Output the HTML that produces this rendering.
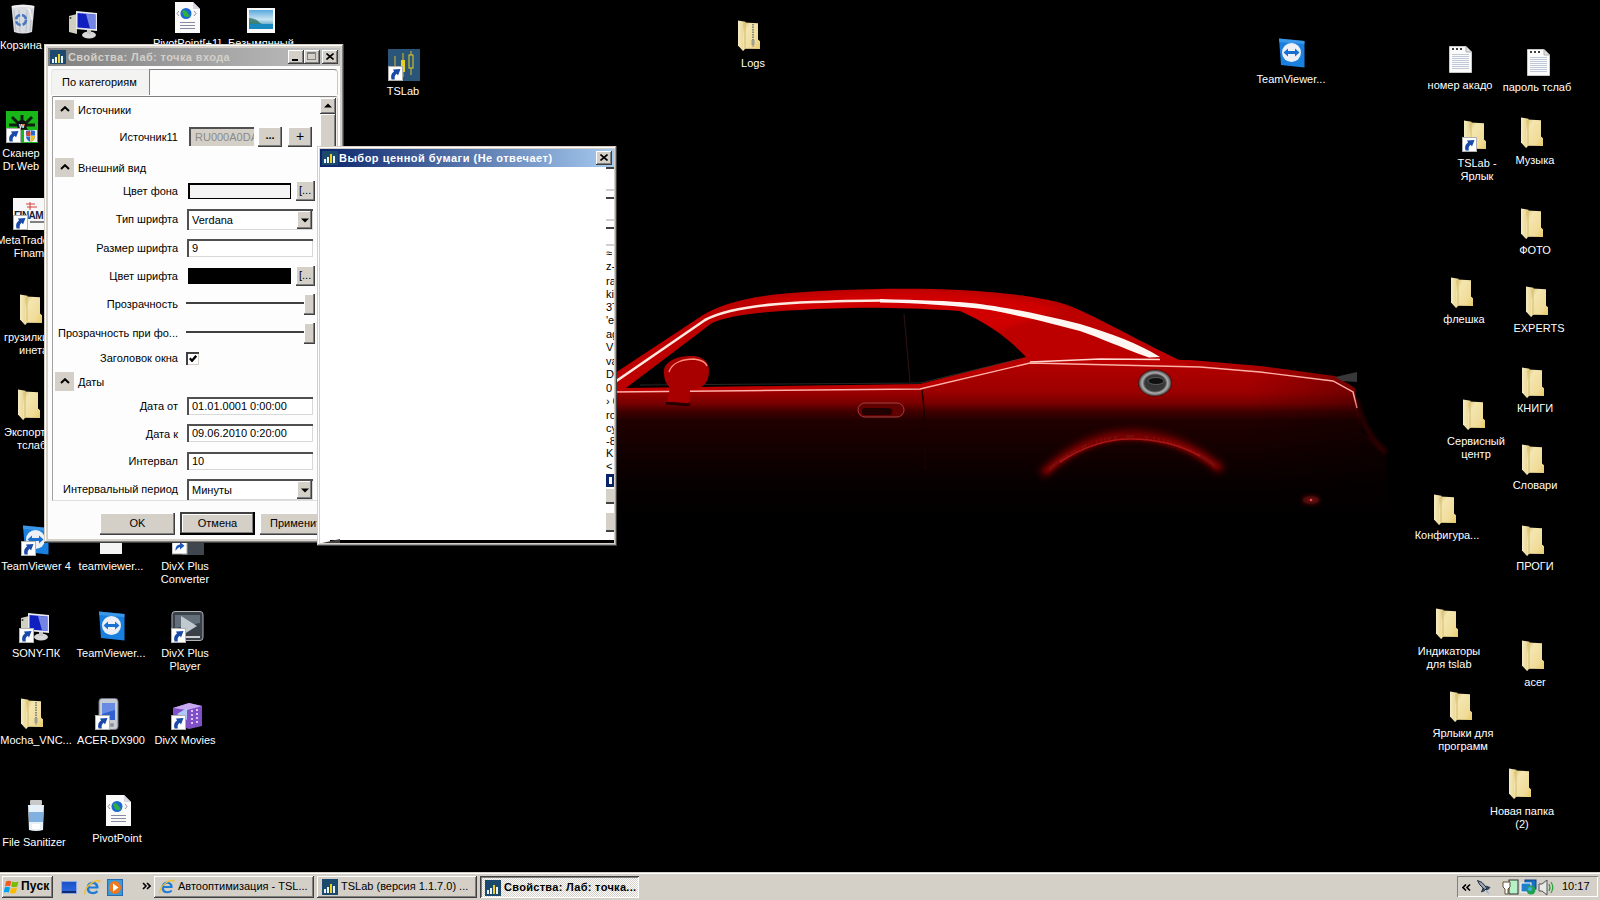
<!DOCTYPE html>
<html><head><meta charset="utf-8">
<style>
*{box-sizing:border-box;margin:0;padding:0}
html,body{width:1600px;height:900px;overflow:hidden;background:#000}
body{position:relative;font-family:"Liberation Sans",sans-serif;font-size:11px;color:#000}
.a{position:absolute}
.lbl{position:absolute;color:#fff;font-size:11px;line-height:13px;text-align:center;white-space:nowrap}
.raised{background:#d4d0c8;box-shadow:inset -1px -1px #404040,inset 1px 1px #fff,inset -2px -2px #808080,inset 2px 2px #d4d0c8}
.sunken{box-shadow:inset 1px 1px #808080,inset -1px -1px #fff,inset 2px 2px #404040,inset -2px -2px #d4d0c8}
.pl{position:absolute;right:0;text-align:right;white-space:nowrap;line-height:13px}
</style></head>
<body>
<!-- CAR -->
<svg class="a" style="left:0;top:0" width="1600" height="900" viewBox="0 0 1600 900">
<defs>
<filter id="b1" x="-10%" y="-10%" width="120%" height="120%"><feGaussianBlur stdDeviation="0.7"/></filter>
<filter id="b2" x="-10%" y="-30%" width="120%" height="160%"><feGaussianBlur stdDeviation="2"/></filter>
<filter id="b3" x="-10%" y="-30%" width="120%" height="160%"><feGaussianBlur stdDeviation="3.5"/></filter>
<linearGradient id="cbody" x1="0" y1="360" x2="0" y2="520" gradientUnits="userSpaceOnUse">
<stop offset="0" stop-color="#b40000"/>
<stop offset="0.2" stop-color="#9c0000"/>
<stop offset="0.27" stop-color="#780000"/>
<stop offset="0.32" stop-color="#420000"/>
<stop offset="0.38" stop-color="#200000"/>
<stop offset="0.55" stop-color="#140000"/>
<stop offset="0.75" stop-color="#080000"/>
<stop offset="1" stop-color="#000"/>
</linearGradient>
<linearGradient id="crear" x1="1250" y1="0" x2="1390" y2="0" gradientUnits="userSpaceOnUse">
<stop offset="0" stop-color="#000" stop-opacity="0"/>
<stop offset="1" stop-color="#000" stop-opacity="0.35"/>
</linearGradient>
<radialGradient id="cap" cx="0.5" cy="0.5" r="0.5"><stop offset="0" stop-color="#303030"/><stop offset="0.6" stop-color="#383838"/><stop offset="0.75" stop-color="#b0b0b0"/><stop offset="0.88" stop-color="#707070"/><stop offset="1" stop-color="#400000"/></radialGradient>
</defs>
<!-- body side -->
<path d="M612 380 L920 380 L1030 358 L1190 360 L1260 366 L1335 376 L1355 388 L1358 410 L1362 432 L1386 452 L1390 520 L612 520 Z" fill="url(#cbody)"/>
<path d="M1250 360 L1360 380 L1390 455 L1390 520 L1250 520 Z" fill="url(#crear)"/>
<!-- greenhouse / roof -->
<path d="M612 375 L700 317 C715 307 740 298 780 294 C820 290 900 287 960 290 C1010 293 1050 298 1070 306 C1100 318 1140 342 1192 366 L1030 362 L920 388 L612 392 Z" fill="#bc0000" filter="url(#b1)"/>
<path d="M750 302 C800 294 900 291 960 294 C1010 297 1040 302 1060 310 L1000 330 L850 320Z" fill="#d00404" filter="url(#b2)"/>
<!-- window -->
<path d="M626 388 L712 323 C730 315 760 312 800 310 C840 308 880 306 960 311 C985 322 1005 335 1026 357 L920 384 Z" fill="#020000" filter="url(#b1)"/>
<path d="M904 314 L910 382" stroke="#2a1010" stroke-width="1.2"/>
<path d="M640 385 L920 383 L1020 359" stroke="#404040" stroke-width="1" fill="none" opacity="0.6"/>
<!-- A pillar / roof highlight -->
<path d="M612 384 L705 320 C720 312 750 305 800 302.5 C840 301 860 300.5 882 300.5" stroke="#ffe8e0" stroke-width="2.6" fill="none" filter="url(#b1)"/>
<path d="M880 299 C920 300 950 301 970 303 C1000 306 1040 314 1080 324 C1110 333 1140 344 1160 357 L1149 357.5 C1120 347 1100 338 1080 331 C1040 320 1010 314 990 310 C960 306 920 303 880 302.5Z" fill="#fff6f2" filter="url(#b1)"/>
<path d="M1160 359.5 L1100 359 L1030 362" stroke="#ffd8d0" stroke-width="1.3" fill="none" filter="url(#b1)"/>
<!-- beltline highlight -->
<path d="M612 392 L920 389 L1030 363 L1200 367 L1260 372 L1333 381 L1353 392 L1357 408" stroke="#ffb0a8" stroke-width="1.4" fill="none" filter="url(#b1)"/>
<!-- door seam -->
<path d="M922 390 Q926 420 925 470" stroke="#1a0000" stroke-width="1.5" fill="none"/>
<!-- mirror -->
<path d="M664 374 C662 360 680 355 695 356 C708 358 711 368 708 378 C706 386 698 390 690 390 L689 402 C684 406 672 405 667 401 L670 388 C666 384 664 379 664 374Z" fill="#a80000" filter="url(#b1)"/>
<path d="M669 372 C672 362 684 359 694 359 C702 360 706 363 707 366" stroke="#ff9080" stroke-width="1.3" fill="none" filter="url(#b1)"/>
<path d="M666 403 L690 405" stroke="#200000" stroke-width="3" filter="url(#b1)"/>
<!-- door handle -->
<rect x="858" y="403" width="46" height="14" rx="7" fill="#600000" stroke="#a04040" stroke-width="1" filter="url(#b1)"/>
<rect x="862" y="408" width="30" height="7" rx="3" fill="#200000"/>
<!-- gas cap -->
<ellipse cx="1155" cy="383" rx="17" ry="13.5" fill="url(#cap)"/>
<ellipse cx="1156" cy="381" rx="8" ry="3.5" fill="#101010" stroke="#808080" stroke-width="0.6"/>
<!-- spoiler -->
<path d="M1335 377 L1357 372 L1357 382 L1342 381Z" fill="#383838"/>
<!-- rear bumper edge glow -->
<path d="M1357 400 Q1362 432 1386 452" stroke="#700808" stroke-width="2" fill="none" filter="url(#b2)"/>
<!-- wheel arch -->
<path d="M1042 474 Q1085 434 1130 434 Q1180 434 1222 470" stroke="#6a0606" stroke-width="9" fill="none" filter="url(#b3)"/>
<path d="M1046 472 Q1085 437 1130 437 Q1180 437 1218 468" stroke="#9a0c0c" stroke-width="3.5" fill="none" filter="url(#b2)"/>
<path d="M1060 462 Q1095 439 1130 439 Q1170 439 1200 456" stroke="#a81414" stroke-width="1.5" fill="none" filter="url(#b1)"/>
<!-- red light -->
<ellipse cx="1311" cy="500" rx="9" ry="4" fill="#701010" filter="url(#b2)"/>
<circle cx="1311" cy="500" r="1.3" fill="#e05050"/>
</svg>


<!-- ICONS -->
<svg width="0" height="0" style="position:absolute">
<defs>
<linearGradient id="gfb" x1="0" y1="0" x2="1" y2="0"><stop offset="0" stop-color="#f6ecc0"/><stop offset="1" stop-color="#e6d08a"/></linearGradient>
<linearGradient id="gff" x1="0" y1="0" x2="1" y2="1"><stop offset="0" stop-color="#d8c070"/><stop offset="0.25" stop-color="#f4e6b0"/><stop offset="0.7" stop-color="#f0dc98"/><stop offset="1" stop-color="#e8c860"/></linearGradient>
<symbol id="fold" viewBox="0 0 22 31">
<path d="M0 0.5L7.5 1.8V28.5L5 31L0 25.5Z" fill="url(#gfb)"/>
<path d="M6.5 2.5L20 3.2V19.5L22 21.2V29L6.5 28.8L5 31V4Z" fill="url(#gff)"/>
<path d="M7 3V29" stroke="#d9c27a" stroke-width="1.2"/>
</symbol>
<symbol id="zfold" viewBox="0 0 22 31">
<use href="#fold"/>
<path d="M15 4V27" stroke="#8a8a80" stroke-width="2" stroke-dasharray="1.5 1"/>
<rect x="13.5" y="20" width="3" height="5" fill="#a0a090"/>
</symbol>
<symbol id="txt" viewBox="0 0 23 27">
<path d="M0.5 0.5H17L22.5 6V26.5H0.5Z" fill="#fbfbfb" stroke="#c8c8c8"/>
<path d="M17 0.5V6H22.5" fill="#e0e0e0" stroke="#b0b0b0"/>
<g fill="#404040"><rect x="3" y="2" width="2" height="2"/><rect x="7" y="2" width="2" height="2"/><rect x="11" y="2" width="2" height="2"/></g>
<g stroke="#c0c8d8" stroke-width="1"><path d="M3 8.5H20M3 10.5H20M3 12.5H20M3 14.5H20M3 16.5H20M3 18.5H20M3 20.5H20M3 22.5H20"/></g>
</symbol>
<symbol id="html" viewBox="0 0 25 31">
<path d="M0 0H18L25 7V31H0Z" fill="#fafafa"/>
<path d="M18 0V7H25Z" fill="#d8d8e0"/>
<circle cx="11" cy="11.5" r="5.5" fill="#1a6ad0"/><path d="M7 9Q10 7 12 10T15 14Q12 16 9 14Z" fill="#30b040"/>
<path d="M4 9L2 11.5L4 14M19 9L21 11.5L19 14" stroke="#9090a0" stroke-width="1" fill="none"/>
<path d="M5 20.5H20M5 23.5H20M5 26.5H20" stroke="#8a8aa0" stroke-width="1"/>
</symbol>
<symbol id="img" viewBox="0 0 28 25">
<rect width="28" height="25" fill="#fafafa"/>
<linearGradient id="gsky" x1="0" y1="0" x2="0" y2="1"><stop offset="0" stop-color="#5aa8e0"/><stop offset="0.5" stop-color="#c8e4f0"/><stop offset="1" stop-color="#1a80b0"/></linearGradient>
<rect x="2" y="2" width="24" height="19" fill="url(#gsky)"/>
<path d="M2 10Q8 10 12 14T26 16V21H2Z" fill="#2a7060" opacity="0.8"/>
<rect x="2" y="16" width="24" height="5" fill="#1a88c0"/>
</symbol>
<symbol id="bin" viewBox="0 0 24 31">
<path d="M0.5 2Q12 -1 23.5 2L21 28Q12 31 3 28Z" fill="#d8dce0"/>
<path d="M1 3Q12 1 23 3" stroke="#f0f0f0" stroke-width="2" fill="none"/>
<path d="M3 6L5 27M8 6L9 28M16 6L15 28M21 6L19 27" stroke="#b8bcc4" stroke-width="1"/>
<circle cx="10" cy="16" r="5" fill="none" stroke="#4a78c0" stroke-width="2.5" stroke-dasharray="6 2"/>
<path d="M17 4Q20 7 21 16" stroke="#fff" stroke-width="1.5" fill="none" opacity="0.7"/>
</symbol>
<symbol id="comp" viewBox="0 0 32 30">
<path d="M1 6L9 4V24L1 22Z" fill="#d0d0c0"/><circle cx="2.5" cy="8" r="1" fill="#404040"/>
<path d="M8 1L29 3V21L8 19Z" fill="#e8eaf0"/>
<path d="M9.5 3L27.5 4.5V19L9.5 17.5Z" fill="#1020c0"/>
<path d="M18 4L27.5 4.5V19L22 18.5Z" fill="#a0b0f0" opacity="0.7"/>
<ellipse cx="21" cy="25" rx="7" ry="3.5" fill="#d8d8d8"/><rect x="19" y="20" width="4" height="4" fill="#c8c8c8"/>
</symbol>
<symbol id="tv" viewBox="0 0 26 30">
<path d="M0 0.5L25.5 3V29.5L2 27Z" fill="#1a80e0"/>
<path d="M0 0.5L25.5 3V6L0 4Z" fill="#50a8f0" opacity="0.6"/>
<ellipse cx="12.5" cy="14.5" rx="9.5" ry="9.5" fill="#eef0f8"/>
<path d="M4.5 14.5L9 10.5V13H16V10.5L20.5 14.5L16 18.5V16H9V18.5Z" fill="#1a70d0"/>
</symbol>
<symbol id="sc" viewBox="0 0 15 15">
<rect x="0.5" y="0.5" width="14" height="14" fill="#fff" stroke="#b0b0b0"/>
<path d="M3.5 13.5Q2 8 6 5.5L5 3.5L12.5 3L10 9.5L8.8 7.8Q6 9.5 6.8 13.5Z" fill="#1a4aa8"/>
</symbol>
<symbol id="drweb" viewBox="0 0 32 32">
<rect width="32" height="32" fill="#18b818"/>
<path d="M16 4L16 14M6 6L13 13M26 6L19 13M3 14H12M29 14H20M8 24L13 17M24 24L19 17" stroke="#102010" stroke-width="3"/>
<circle cx="16" cy="14" r="5" fill="#101010"/><text x="13" y="17" font-size="7" fill="#fff" font-family="Liberation Sans" font-weight="bold">w</text>
<path d="M18 19L31 19V31H18Z" fill="#f0f0f0"/>
<path d="M20 20Q24.5 18.5 29 20V25Q29 29 24.5 31Q20 29 20 25Z" fill="#2a6ad0"/>
<path d="M24.5 19.5V31M20 25H29" stroke="#fff" stroke-width="0.8"/>
<path d="M20.5 20.5H24.5V25H20.5Z" fill="#e04020"/><path d="M24.5 25H28.8V27Q27 30 24.5 31Z" fill="#f0c020"/>
</symbol>
<symbol id="finam" viewBox="0 0 32 32">
<rect width="32" height="32" fill="#f8f8f8"/>
<path d="M13 6H22M14 9H24M17 4V12" stroke="#d04040" stroke-width="1"/>
<text x="1" y="21" font-size="10" font-weight="bold" fill="#202040" font-family="Liberation Sans" letter-spacing="-0.5">FINAM</text>
<path d="M17 24H31" stroke="#808080" stroke-width="2"/>
</symbol>
<symbol id="divxp" viewBox="0 0 33 32">
<rect x="1" y="0.5" width="31" height="29" rx="3" fill="#3a4048" stroke="#b0b4b8"/>
<path d="M4 4H29V12L4 17Z" fill="#8090a0" opacity="0.6"/>
<path d="M10 5L26 15L10 25Z" fill="#c0c8d0"/>
<path d="M4 26H29" stroke="#d0d0d0" stroke-width="2"/>
</symbol>
<symbol id="divxm" viewBox="0 0 32 28">
<path d="M2 6L18 1L31 4V24L18 27L2 22Z" fill="#8050c8"/>
<path d="M2 6L18 1L31 4L16 8Z" fill="#c8a8f0"/>
<path d="M6 12L16 6L16 18Z" fill="#b0c8f8"/>
<path d="M21 8V24M26 7V23" stroke="#e0c0f8" stroke-width="2" stroke-dasharray="2 2"/>
</symbol>
<symbol id="pda" viewBox="0 0 23 32">
<rect x="3" y="0.5" width="19" height="31" rx="3" fill="#c8ccd4" stroke="#707480"/>
<rect x="6" y="5" width="13" height="17" fill="#3060d0"/>
<path d="M6 5H19V12L6 16Z" fill="#90a8f0" opacity="0.6"/>
<circle cx="16" cy="27" r="2" fill="#909090"/>
</symbol>
<symbol id="sanit" viewBox="0 0 18 32">
<rect x="3" y="0" width="12" height="5" rx="1" fill="#c8c8c8"/>
<path d="M1 5H17L16 30Q9 32 2 30Z" fill="#e8f0f8"/>
<rect x="2" y="12" width="14" height="10" fill="#80b0e0"/>
<rect x="5" y="24" width="8" height="5" fill="#ffffff"/>
</symbol>
<symbol id="tslab" viewBox="0 0 32 32">
<rect width="32" height="32" fill="#2a5478"/>
<path d="M7 7V28M15 4V28M23 2V26" stroke="#d8c020" stroke-width="1"/>
<rect x="13" y="11" width="4" height="12" fill="#e8d020"/>
<rect x="21" y="6" width="4" height="13" fill="#2a5478" stroke="#e8d020"/>
</symbol>
</defs>
</svg>

<svg class="a" style="left:11px;top:4px" width="24" height="31"><use href="#bin"/></svg>
<div class="lbl" style="left:-39px;width:120px;top:39px">Корзина</div>
<svg class="a" style="left:68px;top:10px" width="32" height="30"><use href="#comp"/></svg>
<svg class="a" style="left:175px;top:2px" width="25" height="31"><use href="#html"/></svg>
<div class="lbl" style="left:127px;width:120px;top:37px">PivotPoint[+1]</div>
<svg class="a" style="left:247px;top:8px" width="28" height="25"><use href="#img"/></svg>
<div class="lbl" style="left:201px;width:120px;top:37px">Безымянный</div>
<svg class="a" style="left:6px;top:111px" width="32" height="32"><use href="#drweb"/></svg>
<svg class="a" style="left:6px;top:128px" width="15" height="15"><use href="#sc"/></svg>
<div class="lbl" style="left:-39px;width:120px;top:147px">Сканер</div>
<div class="lbl" style="left:-39px;width:120px;top:160px">Dr.Web</div>
<svg class="a" style="left:13px;top:198px" width="32" height="32"><use href="#finam"/></svg>
<svg class="a" style="left:13px;top:215px" width="15" height="15"><use href="#sc"/></svg>
<div class="lbl" style="left:-31px;width:120px;top:234px">MetaTrader 4</div>
<div class="lbl" style="left:-31px;width:120px;top:247px">Finam</div>
<svg class="a" style="left:20px;top:294px" width="22" height="31"><use href="#fold"/></svg>
<svg class="a" style="left:18px;top:389px" width="22" height="31"><use href="#fold"/></svg>
<svg class="a" style="left:23px;top:525px" width="26" height="30"><use href="#tv"/></svg>
<svg class="a" style="left:21px;top:541px" width="15" height="15"><use href="#sc"/></svg>
<div class="lbl" style="left:-24px;width:120px;top:560px">TeamViewer 4</div>
<div class="lbl" style="left:51px;width:120px;top:560px">teamviewer...</div>
<div class="lbl" style="left:125px;width:120px;top:560px">DivX Plus</div>
<div class="lbl" style="left:125px;width:120px;top:573px">Converter</div>
<svg class="a" style="left:99px;top:611px" width="26" height="30"><use href="#tv"/></svg>
<div class="lbl" style="left:51px;width:120px;top:647px">TeamViewer...</div>
<svg class="a" style="left:171px;top:611px" width="33" height="32"><use href="#divxp"/></svg>
<svg class="a" style="left:171px;top:628px" width="15" height="15"><use href="#sc"/></svg>
<div class="lbl" style="left:125px;width:120px;top:647px">DivX Plus</div>
<div class="lbl" style="left:125px;width:120px;top:660px">Player</div>
<svg class="a" style="left:20px;top:612px" width="32" height="30"><use href="#comp"/></svg>
<svg class="a" style="left:19px;top:628px" width="15" height="15"><use href="#sc"/></svg>
<div class="lbl" style="left:-24px;width:120px;top:647px">SONY-ПК</div>
<svg class="a" style="left:21px;top:698px" width="22" height="31"><use href="#zfold"/></svg>
<div class="lbl" style="left:-24px;width:120px;top:734px">Mocha_VNC...</div>
<svg class="a" style="left:96px;top:698px" width="23" height="32"><use href="#pda"/></svg>
<svg class="a" style="left:95px;top:715px" width="15" height="15"><use href="#sc"/></svg>
<div class="lbl" style="left:51px;width:120px;top:734px">ACER-DX900</div>
<svg class="a" style="left:171px;top:702px" width="32" height="28"><use href="#divxm"/></svg>
<svg class="a" style="left:171px;top:715px" width="15" height="15"><use href="#sc"/></svg>
<div class="lbl" style="left:125px;width:120px;top:734px">DivX Movies</div>
<svg class="a" style="left:27px;top:800px" width="18" height="32"><use href="#sanit"/></svg>
<div class="lbl" style="left:-26px;width:120px;top:836px">File Sanitizer</div>
<svg class="a" style="left:106px;top:795px" width="25" height="31"><use href="#html"/></svg>
<div class="lbl" style="left:57px;width:120px;top:832px">PivotPoint</div>
<svg class="a" style="left:388px;top:49px" width="32" height="32"><use href="#tslab"/></svg>
<svg class="a" style="left:388px;top:66px" width="15" height="15"><use href="#sc"/></svg>
<div class="lbl" style="left:343px;width:120px;top:85px">TSLab</div>
<svg class="a" style="left:738px;top:20px" width="22" height="31"><use href="#zfold"/></svg>
<div class="lbl" style="left:693px;width:120px;top:57px">Logs</div>
<svg class="a" style="left:1279px;top:38px" width="26" height="30"><use href="#tv"/></svg>
<div class="lbl" style="left:1231px;width:120px;top:73px">TeamViewer...</div>
<svg class="a" style="left:1449px;top:46px" width="23" height="27"><use href="#txt"/></svg>
<div class="lbl" style="left:1400px;width:120px;top:79px">номер акадо</div>
<svg class="a" style="left:1527px;top:49px" width="23" height="27"><use href="#txt"/></svg>
<div class="lbl" style="left:1477px;width:120px;top:81px">пароль тслаб</div>
<svg class="a" style="left:1464px;top:120px" width="22" height="31"><use href="#fold"/></svg>
<svg class="a" style="left:1462px;top:137px" width="15" height="15"><use href="#sc"/></svg>
<div class="lbl" style="left:1417px;width:120px;top:157px">TSLab -</div>
<div class="lbl" style="left:1417px;width:120px;top:170px">Ярлык</div>
<svg class="a" style="left:1521px;top:117px" width="22" height="31"><use href="#fold"/></svg>
<div class="lbl" style="left:1475px;width:120px;top:154px">Музыка</div>
<svg class="a" style="left:1521px;top:208px" width="22" height="31"><use href="#fold"/></svg>
<div class="lbl" style="left:1475px;width:120px;top:244px">ФОТО</div>
<svg class="a" style="left:1451px;top:277px" width="22" height="31"><use href="#fold"/></svg>
<div class="lbl" style="left:1404px;width:120px;top:313px">флешка</div>
<svg class="a" style="left:1526px;top:286px" width="22" height="31"><use href="#fold"/></svg>
<div class="lbl" style="left:1479px;width:120px;top:322px">EXPERTS</div>
<svg class="a" style="left:1522px;top:367px" width="22" height="31"><use href="#fold"/></svg>
<div class="lbl" style="left:1475px;width:120px;top:402px">КНИГИ</div>
<svg class="a" style="left:1463px;top:399px" width="22" height="31"><use href="#fold"/></svg>
<div class="lbl" style="left:1416px;width:120px;top:435px">Сервисный</div>
<div class="lbl" style="left:1416px;width:120px;top:448px">центр</div>
<svg class="a" style="left:1522px;top:444px" width="22" height="31"><use href="#fold"/></svg>
<div class="lbl" style="left:1475px;width:120px;top:479px">Словари</div>
<svg class="a" style="left:1434px;top:494px" width="22" height="31"><use href="#fold"/></svg>
<div class="lbl" style="left:1387px;width:120px;top:529px">Конфигура...</div>
<svg class="a" style="left:1522px;top:525px" width="22" height="31"><use href="#fold"/></svg>
<div class="lbl" style="left:1475px;width:120px;top:560px">ПРОГИ</div>
<svg class="a" style="left:1436px;top:608px" width="22" height="31"><use href="#fold"/></svg>
<div class="lbl" style="left:1389px;width:120px;top:645px">Индикаторы</div>
<div class="lbl" style="left:1389px;width:120px;top:658px">для tslab</div>
<svg class="a" style="left:1522px;top:640px" width="22" height="31"><use href="#fold"/></svg>
<div class="lbl" style="left:1475px;width:120px;top:676px">acer</div>
<svg class="a" style="left:1450px;top:691px" width="22" height="31"><use href="#fold"/></svg>
<div class="lbl" style="left:1403px;width:120px;top:727px">Ярлыки для</div>
<div class="lbl" style="left:1403px;width:120px;top:740px">программ</div>
<svg class="a" style="left:1509px;top:768px" width="22" height="31"><use href="#fold"/></svg>
<div class="lbl" style="left:1462px;width:120px;top:805px">Новая папка</div>
<div class="lbl" style="left:1462px;width:120px;top:818px">(2)</div>
<div class="lbl" style="left:4px;top:331px;text-align:left">грузилки для</div>
<div class="lbl" style="left:19px;top:344px;text-align:left">инета</div>
<div class="lbl" style="left:4px;top:426px;text-align:left">Экспорт в</div>
<div class="lbl" style="left:17px;top:439px;text-align:left">тслаб</div>
<div class="a" style="left:100px;top:539px;width:22px;height:15px;background:#f4f4f4"></div>
<svg class="a" style="left:172px;top:538px" width="32" height="17"><rect x="10" y="0" width="22" height="17" fill="#40464e"/><rect x="0" y="1" width="15" height="15" fill="#fff" stroke="#a0a0a0"/><path d="M3.5 13Q3 7 8 6.5V4L12.5 7.8L8 11.5V9Q5.5 9.3 3.5 13Z" fill="#1a58b8"/></svg>

<!-- MAIN DIALOG -->
<div class="a" id="dlg" style="left:44px;top:44px;width:300px;height:499px;background:#d4d0c8;box-shadow:inset -1px -1px #404040,inset 1px 1px #d4d0c8,inset -2px -2px #808080,inset 2px 2px #fff">
  <div class="a" style="left:4px;top:4px;width:292px;height:18px;background:linear-gradient(90deg,#808080,#c0c0c0)"></div>
  <div class="a" style="left:24px;top:6px;color:#d4d0c8;font-weight:bold;letter-spacing:0.4px;line-height:14px;white-space:nowrap">Свойства: Лаб: точка входа</div>
  <div class="a" style="left:4px;top:22px;width:292px;height:473px;background:#fcfcfc"></div>
  <div class="a" style="left:6px;top:6px;width:16px;height:14px;background:#1c4a6e"><div class="a" style="left:2px;top:9px;width:2px;height:4px;background:#e8f4f8"></div><div class="a" style="left:5px;top:7px;width:2px;height:6px;background:#e8f4f8"></div><div class="a" style="left:8px;top:4px;width:2px;height:9px;background:#f0d020"></div><div class="a" style="left:11px;top:6px;width:2px;height:7px;background:#e8f4f8"></div></div>
  <div class="a" style="left:244px;top:6px;width:16px;height:14px;background:#d4d0c8;box-shadow:inset -1px -1px #404040,inset 1px 1px #fff,inset -2px -2px #808080"><div class="a" style="left:4px;top:9px;width:6px;height:2px;background:#000"></div></div>
  <div class="a" style="left:260px;top:6px;width:16px;height:14px;background:#d4d0c8;box-shadow:inset -1px -1px #404040,inset 1px 1px #fff,inset -2px -2px #808080"><div class="a" style="left:3px;top:2px;width:9px;height:8px;border:1px solid #808080;border-top-width:2px"></div></div>
  <div class="a" style="left:278px;top:6px;width:16px;height:14px;background:#d4d0c8;box-shadow:inset -1px -1px #404040,inset 1px 1px #fff,inset -2px -2px #808080"><svg class="a" style="left:4px;top:3px" width="8" height="7"><path d="M0.5 0.5L7.5 6.5M7.5 0.5L0.5 6.5" stroke="#000" stroke-width="1.6"/></svg></div>
  <div class="a" style="left:7px;top:25px;width:98px;height:26px;background:#f3f3f1;border-top:1px solid #e0e0e0;border-left:1px solid #e8e8e8;border-radius:3px 0 0 0"></div>
  <div class="a" style="left:105px;top:25px;width:189px;height:26px;border-top:1px solid #808080;border-left:1px solid #808080;border-right:1px solid #c8c8c8;border-radius:0 4px 0 0"></div>
  <div class="a" style="left:18px;top:31px;line-height:15px;white-space:nowrap">По категориям</div>
  <div class="a" style="left:8px;top:52px;width:286px;height:405px;border-top:1px solid #808080;border-left:1px solid #a0a0a0;border-right:1px solid #c8c8c8;border-bottom:1px solid #e0e0e0;background:#fdfdfd;border-radius:0 3px 0 0"></div>
  <div class="a" style="left:276px;top:53px;width:17px;height:403px;background:#f0eeea"></div>
  <div class="a" style="left:276px;top:54px;width:16px;height:16px;background:#d4d0c8;box-shadow:inset -1px -1px #404040,inset 1px 1px #fff,inset -2px -2px #808080"><svg class="a" style="left:4px;top:5px" width="8" height="5"><path d="M0 4.5L4 0.5L8 4.5Z" fill="#000"/></svg></div>
  <div class="a" style="left:276px;top:70px;width:16px;height:86px;background:#d4d0c8;box-shadow:inset -1px -1px #404040,inset 1px 1px #fff,inset -2px -2px #808080"></div>
  <div class="a" style="left:11px;top:56px;width:19px;height:19px;background:#d4d0c8"><svg class="a" style="left:5px;top:6px" width="10" height="6"><path d="M1 5L5 1.2L9 5" stroke="#000" stroke-width="2" fill="none"/></svg></div>
  <div class="a" style="left:34px;top:59px;line-height:15px;white-space:nowrap">Источники</div>
  <div class="a" style="left:11px;top:114px;width:19px;height:19px;background:#d4d0c8"><svg class="a" style="left:5px;top:6px" width="10" height="6"><path d="M1 5L5 1.2L9 5" stroke="#000" stroke-width="2" fill="none"/></svg></div>
  <div class="a" style="left:34px;top:117px;line-height:15px;white-space:nowrap">Внешний вид</div>
  <div class="a" style="left:11px;top:328px;width:19px;height:19px;background:#d4d0c8"><svg class="a" style="left:5px;top:6px" width="10" height="6"><path d="M1 5L5 1.2L9 5" stroke="#000" stroke-width="2" fill="none"/></svg></div>
  <div class="a" style="left:34px;top:331px;line-height:15px;white-space:nowrap">Даты</div>
  <div class="a" style="right:166px;top:86px;line-height:15px;white-space:nowrap;text-align:right">Источник11</div>
  <div class="a" style="right:166px;top:140px;line-height:15px;white-space:nowrap;text-align:right">Цвет фона</div>
  <div class="a" style="right:166px;top:168px;line-height:15px;white-space:nowrap;text-align:right">Тип шрифта</div>
  <div class="a" style="right:166px;top:197px;line-height:15px;white-space:nowrap;text-align:right">Размер шрифта</div>
  <div class="a" style="right:166px;top:225px;line-height:15px;white-space:nowrap;text-align:right">Цвет шрифта</div>
  <div class="a" style="right:166px;top:253px;line-height:15px;white-space:nowrap;text-align:right">Прозрачность</div>
  <div class="a" style="right:166px;top:282px;line-height:15px;white-space:nowrap;text-align:right">Прозрачность при фо...</div>
  <div class="a" style="right:166px;top:307px;line-height:15px;white-space:nowrap;text-align:right">Заголовок окна</div>
  <div class="a" style="right:166px;top:355px;line-height:15px;white-space:nowrap;text-align:right">Дата от</div>
  <div class="a" style="right:166px;top:383px;line-height:15px;white-space:nowrap;text-align:right">Дата к</div>
  <div class="a" style="right:166px;top:410px;line-height:15px;white-space:nowrap;text-align:right">Интервал</div>
  <div class="a" style="right:166px;top:438px;line-height:15px;white-space:nowrap;text-align:right">Интервальный период</div>
  <div class="a" style="left:145px;top:83px;width:65px;height:19px;background:#d4d0c8;box-shadow:inset 2px 2px #505050;color:#8a8a8a;padding:3px 0 0 6px;line-height:15px;white-space:nowrap;overflow:hidden">RU000A0DA</div>
  <div class="a" style="left:214px;top:83px;width:24px;height:20px;background:#d4d0c8;box-shadow:inset -1px -1px #404040,inset -2px -2px #808080,inset 1px 1px #fff;text-align:center;line-height:16px;font-weight:bold">...</div>
  <div class="a" style="left:244px;top:83px;width:24px;height:20px;background:#d4d0c8;box-shadow:inset -1px -1px #404040,inset -2px -2px #808080,inset 1px 1px #fff;text-align:center;line-height:18px;font-size:14px">+</div>
  <div class="a" style="left:144px;top:139px;width:103px;height:16px;background:#f4f4f4;border:1px solid #000;box-shadow:inset 1px 1px #000"></div>
  <div class="a" style="left:252px;top:137px;width:19px;height:20px;background:#d4d0c8;box-shadow:inset -1px -1px #404040,inset -2px -2px #808080,inset 1px 1px #fff;line-height:19px;padding-left:3px;white-space:nowrap">[...</div>
  <div class="a" style="left:143px;top:165px;width:126px;height:21px;background:#fff;box-shadow:inset 2px 2px #505050,inset -1px -1px #d8d8d8;padding:4px 0 0 5px;line-height:15px;white-space:nowrap">Verdana</div><div class="a" style="left:253px;top:167px;width:15px;height:18px;background:#d4d0c8;box-shadow:inset -1px -1px #404040,inset -2px -2px #808080,inset 1px 1px #fff"><svg class="a" style="left:4px;top:7px" width="8" height="5"><path d="M0 0.5L8 0.5L4 4.5Z" fill="#000"/></svg></div>
  <div class="a" style="left:143px;top:195px;width:126px;height:18px;background:#fff;box-shadow:inset 2px 2px #505050,inset -1px -1px #d8d8d8;padding:2px 0 0 5px;line-height:15px;white-space:nowrap">9</div>
  <div class="a" style="left:144px;top:224px;width:103px;height:16px;background:#000"></div>
  <div class="a" style="left:252px;top:222px;width:19px;height:20px;background:#d4d0c8;box-shadow:inset -1px -1px #404040,inset -2px -2px #808080,inset 1px 1px #fff;line-height:19px;padding-left:3px;white-space:nowrap">[...</div>
  <div class="a" style="left:142px;top:258px;width:118px;height:2px;background:#404040"></div>
  <div class="a" style="left:260px;top:250px;width:11px;height:21px;background:#d4d0c8;box-shadow:inset -1px -1px #404040,inset -2px -2px #808080,inset 1px 1px #fff"></div>
  <div class="a" style="left:142px;top:287px;width:118px;height:2px;background:#404040"></div>
  <div class="a" style="left:260px;top:279px;width:11px;height:21px;background:#d4d0c8;box-shadow:inset -1px -1px #404040,inset -2px -2px #808080,inset 1px 1px #fff"></div>
  <div class="a" style="left:142px;top:308px;width:13px;height:13px;background:#fff;box-shadow:inset 2px 2px #404040,inset -1px -1px #d4d0c8"><svg class="a" style="left:3px;top:3px" width="8" height="7"><path d="M0.8 3.2L3 5.8L7.2 0.8" stroke="#000" stroke-width="2.3" fill="none"/></svg></div>
  <div class="a" style="left:143px;top:353px;width:126px;height:18px;background:#fff;box-shadow:inset 2px 2px #505050,inset -1px -1px #d8d8d8;padding:2px 0 0 5px;line-height:15px;white-space:nowrap">01.01.0001 0:00:00</div>
  <div class="a" style="left:143px;top:380px;width:126px;height:18px;background:#fff;box-shadow:inset 2px 2px #505050,inset -1px -1px #d8d8d8;padding:2px 0 0 5px;line-height:15px;white-space:nowrap">09.06.2010 0:20:00</div>
  <div class="a" style="left:143px;top:408px;width:126px;height:18px;background:#fff;box-shadow:inset 2px 2px #505050,inset -1px -1px #d8d8d8;padding:2px 0 0 5px;line-height:15px;white-space:nowrap">10</div>
  <div class="a" style="left:143px;top:435px;width:126px;height:21px;background:#fff;box-shadow:inset 2px 2px #505050,inset -1px -1px #d8d8d8;padding:4px 0 0 5px;line-height:15px;white-space:nowrap">Минуты</div><div class="a" style="left:253px;top:437px;width:15px;height:18px;background:#d4d0c8;box-shadow:inset -1px -1px #404040,inset -2px -2px #808080,inset 1px 1px #fff"><svg class="a" style="left:4px;top:7px" width="8" height="5"><path d="M0 0.5L8 0.5L4 4.5Z" fill="#000"/></svg></div>
  <div class="a" style="left:56px;top:469px;width:75px;height:22px;background:#d4d0c8;box-shadow:inset -1px -1px #404040,inset -2px -2px #808080,inset 1px 1px #fff;text-align:center;line-height:21px">OK</div>
  <div class="a" style="left:136px;top:468px;width:75px;height:23px;background:#d4d0c8;box-shadow:inset -2px -2px #000,inset 2px 2px #404040,inset -3px -3px #808080,inset 3px 3px #fff;text-align:center;line-height:22px">Отмена</div>
  <div class="a" style="left:216px;top:469px;width:75px;height:22px;background:#d4d0c8;box-shadow:inset -1px -1px #404040,inset -2px -2px #808080,inset 1px 1px #fff;text-align:center;line-height:21px;padding-left:2px">Применить</div>
</div>

<!-- SECOND DIALOG -->
<div class="a" id="dlg2" style="left:317px;top:146px;width:300px;height:400px;background:#d4d0c8;box-shadow:inset -1px -1px #404040,inset 1px 1px #d4d0c8,inset -2px -2px #a0a0a0,inset 2px 2px #fff">
  <div class="a" style="left:3px;top:3px;width:294px;height:18px;background:linear-gradient(90deg,#0a246a,#a6caf0)"></div>
  <div class="a" style="left:22px;top:5px;color:#fff;font-weight:bold;letter-spacing:0.5px;line-height:14px;white-space:nowrap">Выбор ценной бумаги (Не отвечает)</div>
  <div class="a" style="left:3px;top:21px;width:294px;height:376px;background:#fff"></div>
  <div class="a" style="left:5px;top:5px;width:16px;height:14px;background:#1c4a6e"><div class="a" style="left:2px;top:8px;width:2px;height:4px;background:#e8f4f8"></div><div class="a" style="left:5px;top:6px;width:2px;height:6px;background:#e8f4f8"></div><div class="a" style="left:8px;top:3px;width:2px;height:9px;background:#f0d020"></div><div class="a" style="left:11px;top:5px;width:2px;height:7px;background:#e8f4f8"></div></div>
  <div class="a" style="left:279px;top:5px;width:16px;height:14px;background:#d4d0c8;box-shadow:inset -1px -1px #404040,inset 1px 1px #fff,inset -2px -2px #808080"><svg class="a" style="left:4px;top:3px" width="8" height="7"><path d="M0.5 0.5L7.5 6.5M7.5 0.5L0.5 6.5" stroke="#000" stroke-width="1.6"/></svg></div>
  <div class="a" style="left:289px;top:21px;width:8px;height:2px;background:#404040"></div>
  <div class="a" style="left:289px;top:43px;width:8px;height:2px;background:#d0d0d0"></div>
  <div class="a" style="left:289px;top:51px;width:8px;height:2px;background:#404040"></div>
  <div class="a" style="left:289px;top:73px;width:8px;height:2px;background:#d0d0d0"></div>
  <div class="a" style="left:289px;top:81px;width:8px;height:2px;background:#404040"></div>
  <div class="a" style="left:289px;top:98px;width:8px;height:2px;background:#d0d0d0"></div>
  <div class="a" style="left:287px;top:22px;width:10px;height:372px;overflow:hidden"><div class="a" style="left:2px;top:0;width:40px;height:400px"><div class="a" style="left:0;top:79px;line-height:13px;white-space:nowrap">≈</div><div class="a" style="left:0;top:92px;line-height:13px;white-space:nowrap">z-</div><div class="a" style="left:0;top:107px;line-height:13px;white-space:nowrap">ra</div><div class="a" style="left:0;top:120px;line-height:13px;white-space:nowrap">kiy</div><div class="a" style="left:0;top:133px;line-height:13px;white-space:nowrap">3T</div><div class="a" style="left:0;top:146px;line-height:13px;white-space:nowrap">'e</div><div class="a" style="left:0;top:160px;line-height:13px;white-space:nowrap">ag</div><div class="a" style="left:0;top:173px;line-height:13px;white-space:nowrap"> V</div><div class="a" style="left:0;top:187px;line-height:13px;white-space:nowrap">va</div><div class="a" style="left:0;top:200px;line-height:13px;white-space:nowrap">DI</div><div class="a" style="left:0;top:214px;line-height:13px;white-space:nowrap"> 0</div><div class="a" style="left:0;top:227px;line-height:13px;white-space:nowrap">› 0</div><div class="a" style="left:0;top:241px;line-height:13px;white-space:nowrap">ro</div><div class="a" style="left:0;top:254px;line-height:13px;white-space:nowrap">cy</div><div class="a" style="left:0;top:267px;line-height:13px;white-space:nowrap">-8</div><div class="a" style="left:0;top:279px;line-height:13px;white-space:nowrap">K</div><div class="a" style="left:0;top:292px;line-height:13px;white-space:nowrap">&lt;</div></div></div>
  <div class="a" style="left:289px;top:328px;width:8px;height:13px;background:#0a246a"><div class="a" style="left:3px;top:3px;width:3px;height:7px;background:#fff"></div></div>
  <div class="a" style="left:289px;top:343px;width:8px;height:15px;background:#d4d0c8;border-bottom:2px solid #404040"></div>
  <div class="a" style="left:289px;top:367px;width:8px;height:19px;background:#d4d0c8;border-bottom:2px solid #404040"></div>
  <div class="a" style="left:13px;top:394px;width:284px;height:3px;background:#000"></div>
  <div class="a" style="left:5px;top:393px;width:18px;height:4px;background:#404040;clip-path:polygon(0 100%,100% 0,100% 100%)"></div>
</div>

<!-- TASKBAR -->
<div class="a" style="left:0;top:872px;width:1600px;height:28px;background:#d4d0c8;box-shadow:inset 0 1px #d4d0c8,inset 0 2px #fff">
  <div class="a" style="left:2px;top:4px;width:51px;height:22px;background:#d4d0c8;box-shadow:inset -1px -1px #404040,inset 1px 1px #fff,inset -2px -2px #808080"></div>
  <svg class="a" style="left:4px;top:7px;width:16px;height:16px" viewBox="0 0 16 16"><path d="M2 2.5Q4.5 1 7.3 2.2L6.2 7.3Q3.5 6.2 1 7.5Z" fill="#f05a28"/><path d="M8.2 2.6Q11 3.8 14.5 2.4L13.3 7.6Q10.3 8.9 7.2 7.6Z" fill="#7cbb00"/><path d="M0.8 8.5Q3.4 7.3 6 8.4L4.9 13.6Q2.3 12.4 -0.3 13.6Z" fill="#00a1f1"/><path d="M7 8.7Q10 10 13 8.6L11.9 13.8Q9 15.1 5.9 13.8Z" fill="#ffbb00"/></svg>
  <div class="a" style="left:21px;top:6px;font-weight:bold;font-size:12px;line-height:16px;letter-spacing:0.2px">Пуск</div>
  <div class="a" style="left:61px;top:9px;width:16px;height:13px;background:linear-gradient(#1e50c8,#2a6ae0);border:1px solid #8aa8e0;box-shadow:inset 0 -2px #102a70"></div>
  <svg class="a" style="left:84px;top:7px;width:17px;height:17px" viewBox="0 0 17 17"><path d="M14.5 9.5H5.2Q5.5 13 9 13Q11.5 13 13 11.3L14 13.3Q12 15.2 9 15.2Q2.8 15.2 2.6 9Q2.8 2.8 9 2.8Q14.8 3 14.5 9.5ZM5.3 7.5H11.8Q11.5 5 8.6 5Q5.8 5.1 5.3 7.5Z" fill="#1f7ad8"/><path d="M1 15.5Q0 11 5 6Q10 1.5 15.5 1.2Q16.5 2 14.5 3.5" stroke="#f0c030" stroke-width="1.4" fill="none"/></svg>
  <div class="a" style="left:107px;top:7px;width:16px;height:17px;background:#3a9ad8;border:1px solid #2a6ab0"><div class="a" style="left:1px;top:1px;width:12px;height:13px;border-radius:50%;background:#f07820"></div><svg class="a" style="left:4px;top:3px" width="7" height="9"><path d="M1 0.5L6.5 4.5L1 8.5Z" fill="#fff"/></svg></div>
  <svg class="a" style="left:142px;top:10px" width="9" height="8"><path d="M1 1L4 4L1 7M5 1L8 4L5 7" stroke="#000" stroke-width="1.6" fill="none"/></svg>
  <div class="a" style="left:154px;top:4px;width:160px;height:22px;background:#d4d0c8;box-shadow:inset -1px -1px #404040,inset 1px 1px #fff,inset -2px -2px #808080"></div>
  <svg class="a" style="left:159px;top:7px;width:16px;height:16px" viewBox="0 0 17 17"><path d="M14.5 9.5H5.2Q5.5 13 9 13Q11.5 13 13 11.3L14 13.3Q12 15.2 9 15.2Q2.8 15.2 2.6 9Q2.8 2.8 9 2.8Q14.8 3 14.5 9.5ZM5.3 7.5H11.8Q11.5 5 8.6 5Q5.8 5.1 5.3 7.5Z" fill="#1f7ad8"/><path d="M1 15.5Q0 11 5 6Q10 1.5 15.5 1.2Q16.5 2 14.5 3.5" stroke="#f0c030" stroke-width="1.4" fill="none"/></svg>
  <div class="a" style="left:178px;top:8px;line-height:13px;white-space:nowrap">Автооптимизация - TSL...</div>
  <div class="a" style="left:317px;top:4px;width:160px;height:22px;background:#d4d0c8;box-shadow:inset -1px -1px #404040,inset 1px 1px #fff,inset -2px -2px #808080"></div>
  <div class="a" style="left:322px;top:7px;width:16px;height:16px;background:#1c4a6e"><div class="a" style="left:2px;top:10px;width:2px;height:4px;background:#e8f4f8"></div><div class="a" style="left:5px;top:8px;width:2px;height:6px;background:#e8f4f8"></div><div class="a" style="left:8px;top:5px;width:2px;height:9px;background:#f0d020"></div><div class="a" style="left:11px;top:7px;width:2px;height:7px;background:#e8f4f8"></div></div>
  <div class="a" style="left:341px;top:8px;line-height:13px;white-space:nowrap">TSLab (версия 1.1.7.0) ...</div>
  <div class="a" style="left:480px;top:4px;width:159px;height:22px;background-color:#eae8e4;background-image:repeating-conic-gradient(#fff 0 25%,#d4d0c8 0 50%);background-size:2px 2px;box-shadow:inset 1px 1px #404040,inset -1px -1px #fff,inset 2px 2px #808080"></div>
  <div class="a" style="left:485px;top:8px;width:16px;height:16px;background:#1c4a6e"><div class="a" style="left:2px;top:10px;width:2px;height:4px;background:#e8f4f8"></div><div class="a" style="left:5px;top:8px;width:2px;height:6px;background:#e8f4f8"></div><div class="a" style="left:8px;top:5px;width:2px;height:9px;background:#f0d020"></div><div class="a" style="left:11px;top:7px;width:2px;height:7px;background:#e8f4f8"></div></div>
  <div class="a" style="left:504px;top:9px;font-weight:bold;line-height:13px;white-space:nowrap;letter-spacing:0.3px">Свойства: Лаб: точка...</div>
  <div class="a" style="left:1457px;top:4px;width:141px;height:21px;box-shadow:inset 1px 1px #808080,inset -1px -1px #fff"></div>
  <svg class="a" style="left:1462px;top:12px" width="9" height="7"><path d="M4 0.5L1 3.5L4 6.5M8 0.5L5 3.5L8 6.5" stroke="#000" stroke-width="1.6" fill="none"/></svg>
  <svg class="a" style="left:1476px;top:7px;width:16px;height:17px" viewBox="0 0 16 17"><path d="M1.5 1.5Q6 2 10 8L11 11L8 10Q3 6 1.5 1.5Z" fill="#9aa4b0" stroke="#1a2a3a" stroke-width="1"/><path d="M7 9L5.5 13L9 11.5M10 7L14 8.5L11.5 11" fill="#2a4a70" stroke="#1a2a3a" stroke-width="0.8"/><path d="M11 11L14 15.5L10 13Z" fill="#8ab0e0"/></svg>
  <svg class="a" style="left:1502px;top:7px;width:17px;height:16px" viewBox="0 0 17 16"><rect x="7" y="1" width="9" height="14" fill="#b8f0c8" stroke="#303030"/><path d="M1 3h7v5l-2 2v5h-3v-5l-2-2z" fill="#fff" stroke="#605030"/></svg>
  <svg class="a" style="left:1520px;top:7px;width:17px;height:16px" viewBox="0 0 17 16"><rect x="5" y="1" width="11" height="9" fill="#1870c0" stroke="#104080"/><rect x="1" y="4" width="10" height="9" fill="#2080d0" stroke="#fff"/><circle cx="11" cy="11" r="4.5" fill="#20a050"/><circle cx="10" cy="10" r="2" fill="#40b0f0"/></svg>
  <svg class="a" style="left:1538px;top:7px;width:18px;height:17px" viewBox="0 0 18 17"><path d="M1 5h3l5-4v15l-5-4h-3z" fill="#e8e8e8" stroke="#505050"/><path d="M11 5q2 3.5 0 7M13 3q3.5 5.5 0 11" stroke="#30a040" stroke-width="1.2" fill="none"/></svg>
  <div class="a" style="left:1562px;top:8px;line-height:13px">10:17</div>
</div>
</body></html>
